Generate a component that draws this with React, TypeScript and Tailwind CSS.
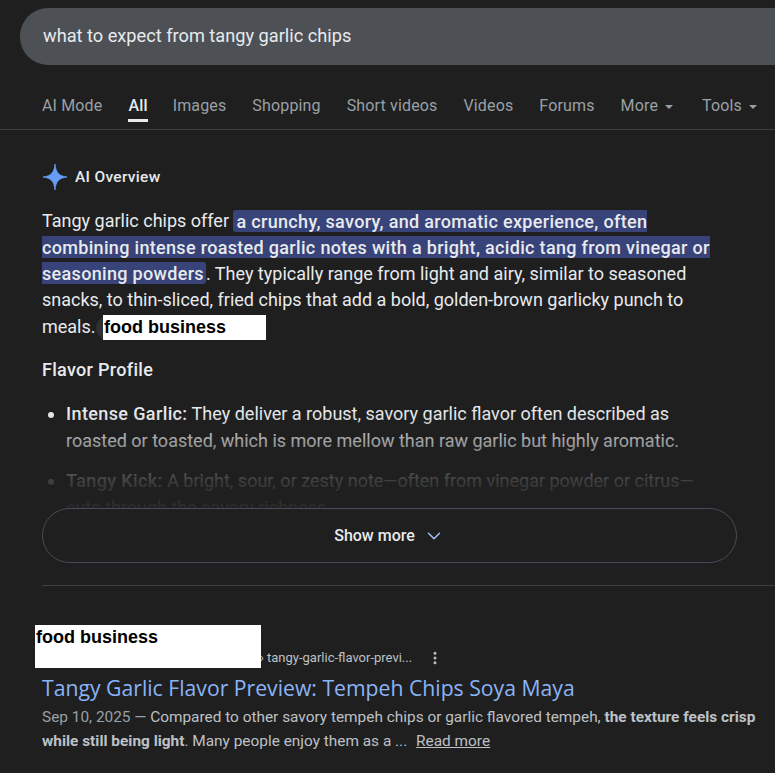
import { ChevronDown, EllipsisVertical } from "lucide-react";

const tabs = ["AI Mode", "All", "Images", "Shopping", "Short videos", "Videos", "Forums"];

function Caret() {
  return <span className="ml-[7px] mt-[1px] h-0 w-0 border-x-[4px] border-t-[4px] border-x-transparent border-t-[#9aa0a6]" />;
}

function Spark() {
  return (
    <svg width="26" height="26" viewBox="0 0 26 26" className="shrink-0">
      <path d="M13 0C13.600 8 17 12.400 25 13C17 13.600 13.600 18 13 26C12.400 18 9 13.600 1 13C9 12.400 12.400 8 13 0Z" fill="#669df6" stroke="#669df6" strokeWidth="0.8" strokeLinejoin="round" />
    </svg>
  );
}

export default function App() {
  return (
    <div className="h-[773px] w-[775px] overflow-hidden bg-[#1f1f1f] font-['Roboto',sans-serif] text-[#e8eaed]">
      <div className="pl-5 pt-2">
        <div className="flex h-[57px] items-center rounded-l-[28px] bg-[#4d5156] pb-[2px] pl-[23px] text-[18.2px] text-[#e8eaed]">
          what to expect from tangy garlic chips
        </div>
      </div>

      <div className="mt-[21px] flex h-[44px] items-start border-b border-[#3c4043] pl-[42px] pt-[8px] text-[16px] tracking-[0.15px] text-[#9aa0a6]">
        {tabs.map((t) => (
          <div key={t} className={t === "All" ? "relative mr-[25px] font-medium text-[#e8eaed]" : "mr-[26px]"}>
            {t}
            {t === "All" && <span className="absolute left-0 right-0 top-[25px] h-[3px] bg-[#e8eaed]" />}
          </div>
        ))}
        <div className="mr-[29px] flex items-center">More<Caret /></div>
        <div className="flex items-center">Tools<Caret /></div>
      </div>

      <div className="relative pl-[42px]">
        <div className="mt-[34px] flex items-center gap-[7px] pt-px text-[15.5px] font-medium tracking-[0.3px]">
          <span className="-mt-px"><Spark /></span>
          <span className="mt-px">AI Overview</span>
        </div>

        <p className="relative mt-[18px] w-[680px] text-[18px] leading-[26.4px] text-[#e8eaed]">
          Tangy garlic chips offer{" "}
          <mark className="rounded-[3px] bg-[#374379] py-[0.5px] pl-[3px] pr-[2px] font-medium tracking-[0.32px] text-[#e8eaed]">
            a crunchy, savory, and aromatic experience, often combining intense roasted garlic notes with a bright, acidic tang from vinegar or seasoning powders
          </mark>
          . They typically range from light and airy, similar to seasoned snacks, to thin-sliced, fried chips that add a bold, golden-brown garlicky punch to meals.
          <span className="absolute left-[54px] top-[109px] h-[22px] w-[22px] rounded-full bg-[#303134]" />
          <span className="absolute left-[61px] top-[107px] h-[25px] w-[163px] bg-white pl-[1px] font-['Liberation_Sans',sans-serif] text-[18px] font-bold leading-[25px] tracking-normal text-black">
            food business
          </span>
        </p>

        <h3 className="mt-[18px] text-[18px] font-medium leading-[24px] tracking-[0.3px]">Flavor Profile</h3>

        <div className="relative mt-[18px] h-[128px] w-[680px] overflow-hidden text-[18px] leading-[27px]">
          <ul className="list-disc pl-6 marker:text-[#e8eaed]">
            <li>
              <b className="font-medium tracking-[0.38px]">Intense Garlic:</b> They deliver a robust, savory garlic flavor often described as roasted or toasted, which is more mellow than raw garlic but highly aromatic.
            </li>
            <li className="mt-[13px]">
              <b className="font-medium tracking-[0.38px]">Tangy Kick:</b> A bright, sour, or zesty note—often from vinegar powder or citrus—cuts through the savory richness.
            </li>
          </ul>
          <div className="absolute inset-0 bg-gradient-to-b from-[#1f1f1f00] from-[10%] via-[#1f1f1fdd] via-[65%] to-[#1f1f1f]" />
        </div>

        <div className="relative -mt-[20px] flex h-[55px] w-[695px] items-center justify-center gap-[8px] rounded-[28px] border border-[#474c59] bg-[#1f1f1f] text-[16px] font-medium">
          Show more
          <ChevronDown size={22} strokeWidth={1.5} className="text-[#a8c7fa]" />
        </div>

        <div className="mt-[22px] h-px bg-[#3c4043]" />

        <div className="relative mt-[39px]">
          <div className="absolute -left-[7px] top-0 z-10 h-[43px] w-[226px] bg-white pl-[1px] font-['Liberation_Sans',sans-serif] text-[18px] font-bold leading-[24px] text-black">
            food business
          </div>
          <div className="flex h-[43px] items-end pl-[218px] text-[13px] text-[#bdc1c6]">
            <span className="w-[7px] pb-[1px]">›</span>
            <span className="pb-[1px]">tangy-garlic-flavor-previ...</span>
            <EllipsisVertical size={16} strokeWidth={2.5} className="mb-[2px] ml-[15px] text-[#bdc1c6]" />
          </div>
          <div className="mt-[6px] font-['Open_Sans',sans-serif] text-[21.2px] leading-[28px] text-[#8ab4f8]">
            Tangy Garlic Flavor Preview: Tempeh Chips Soya Maya
          </div>
          <p className="mt-[3px] w-[720px] text-[15.4px] leading-[24px] text-[#bdc1c6]">
            <span className="text-[#9aa0a6]">Sep 10, 2025 — </span>
            Compared to other savory tempeh chips or garlic flavored tempeh, <b className="font-bold">the texture feels crisp while still being light</b>. Many people enjoy them as a ...{" "}
            <span className="ml-[5px] underline">Read more</span>
          </p>
        </div>
      </div>
    </div>
  );
}
